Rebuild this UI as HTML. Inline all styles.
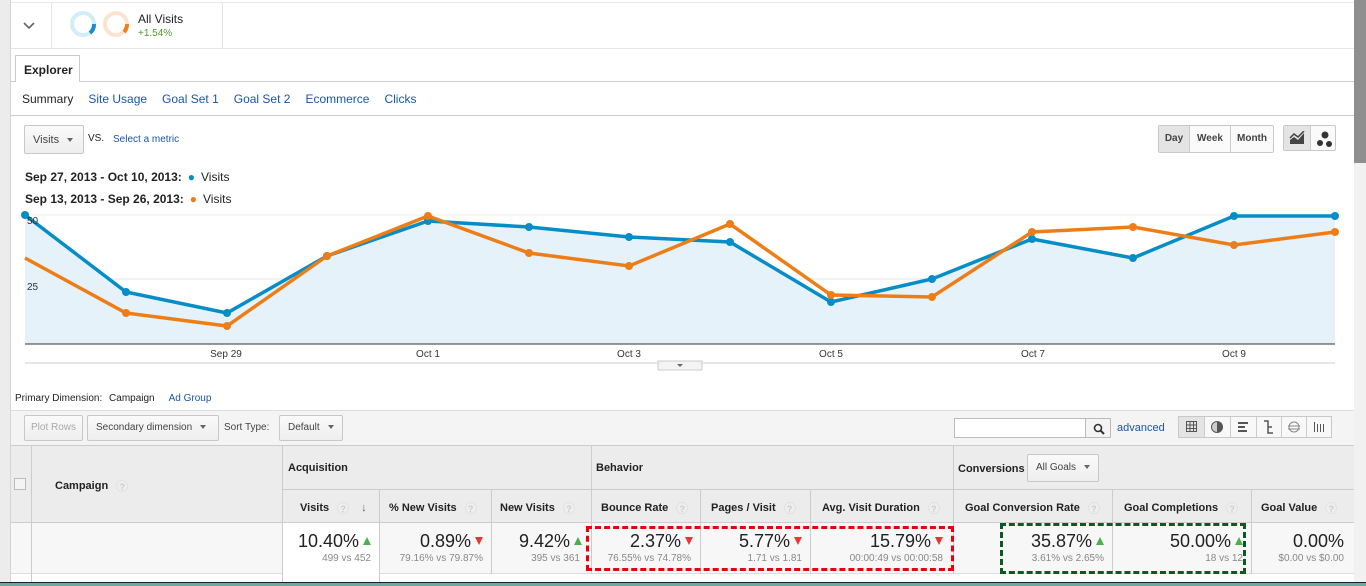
<!DOCTYPE html>
<html><head><meta charset="utf-8"><style>
*{box-sizing:border-box;margin:0;padding:0}
body{width:1366px;height:586px;overflow:hidden;background:#fff;font-family:"Liberation Sans",Arial,sans-serif;position:relative;color:#222}
.a{position:absolute}
.link{color:#1a56a8}
.q{display:inline-block;width:12px;height:12px;border-radius:50%;background:#eee;color:#ccc;font-size:9px;text-align:center;line-height:12px;vertical-align:middle;margin-left:8px;border:1px solid #e2e2e2}
.btn{position:absolute;border:1px solid #c8c8c8;border-radius:2px;background:linear-gradient(#fafafa,#eee);font-size:11px;color:#444;line-height:24px;padding:0 8px}
.tri{display:inline-block;width:0;height:0;border-left:3px solid transparent;border-right:3px solid transparent;border-top:4px solid #666;vertical-align:middle;margin-left:8px}
.h{position:absolute;font-size:11px;font-weight:bold;color:#222}
.big{position:absolute;font-size:18px;color:#222;text-align:right;white-space:nowrap}
.sm{position:absolute;font-size:10px;color:#888;text-align:right;white-space:nowrap}
.up{display:inline-block;width:0;height:0;border-left:4px solid transparent;border-right:4px solid transparent;border-bottom:8px solid #4caf50;margin-left:4px;vertical-align:2px}
.dn{display:inline-block;width:0;height:0;border-left:4px solid transparent;border-right:4px solid transparent;border-top:8px solid #e53935;margin-left:4px;vertical-align:2px}
</style></head><body>
<div class="a" style="left:0;top:0;width:11px;height:586px;background:#ececec;border-right:1px solid #d4d4d4"></div>
<div class="a" style="left:1354px;top:0;width:12px;height:586px;background:#f1f1f1"></div>
<div class="a" style="left:1354px;top:0;width:12px;height:163px;background:#8f8f8f"></div>
<div class="a" style="left:11px;top:2px;width:1343px;height:1px;background:#e8e8e8"></div>
<div class="a" style="left:11px;top:48px;width:1343px;height:1px;background:#e5e5e5"></div>
<div class="a" style="left:51px;top:3px;width:172px;height:46px;border-left:1px solid #e5e5e5;border-right:1px solid #e5e5e5"></div>
<svg class="a" style="left:23px;top:22px" width="12" height="8"><path d="M1 1 L6 6 L11 1" stroke="#666" stroke-width="1.6" fill="none"/></svg>
<svg class="a" style="left:69px;top:10px" width="64" height="30"><circle cx="14" cy="14" r="11" fill="none" stroke="#d2ecf8" stroke-width="4"/><path d="M25 14 A11 11 0 0 1 21 23" stroke="#1b8ad1" stroke-width="4" fill="none"/><circle cx="47" cy="14" r="11" fill="none" stroke="#fde3cf" stroke-width="4"/><path d="M58 14 A11 11 0 0 1 55 22" stroke="#f07f1d" stroke-width="4" fill="none"/></svg>
<div class="a" style="left:138px;top:12px;font-size:12px">All Visits</div>
<div class="a" style="left:138px;top:28px;font-size:10px;color:#4a9b2b">+1.54%</div>
<div class="a" style="left:11px;top:81px;width:1343px;height:1px;background:#ccc"></div>
<div class="a" style="left:15px;top:55px;width:65px;height:27px;background:#fff;z-index:1;border:1px solid #ccc;border-bottom:none;font-size:12px;font-weight:bold;padding:7px 0 0 8px">Explorer</div>
<div class="a" style="left:22px;top:92px;font-size:12px"><span>Summary</span><span class="link" style="margin-left:15px">Site Usage</span><span class="link" style="margin-left:15px">Goal Set 1</span><span class="link" style="margin-left:15px">Goal Set 2</span><span class="link" style="margin-left:15px">Ecommerce</span><span class="link" style="margin-left:15px">Clicks</span></div>
<div class="a" style="left:11px;top:115px;width:1343px;height:1px;background:#ccc"></div>
<div class="btn" style="left:24px;top:125px;height:29px;line-height:28px;width:60px">Visits<span class="tri"></span></div>
<div class="a" style="left:88px;top:133px;font-size:10px">VS.</div>
<div class="a link" style="left:113px;top:134px;font-size:10px">Select a metric</div>
<div class="a" style="left:1158px;top:125px;width:116px;height:28px;border:1px solid #c8c8c8;border-radius:2px;background:#fafafa;font-size:10px;font-weight:bold;color:#444">
<span class="a" style="left:0;top:0;width:31px;height:26px;background:#e4e4e4;border-right:1px solid #ccc;text-align:center;line-height:26px">Day</span>
<span class="a" style="left:31px;top:0;width:41px;height:26px;border-right:1px solid #ccc;text-align:center;line-height:26px">Week</span>
<span class="a" style="left:72px;top:0;width:42px;height:26px;text-align:center;line-height:26px">Month</span></div>
<div class="a" style="left:1283px;top:125px;width:53px;height:26px;border:1px solid #c8c8c8;border-radius:2px;background:#fafafa">
<span class="a" style="left:0;top:0;width:27px;height:24px;background:#e4e4e4;border-right:1px solid #ccc"></span>
<svg class="a" style="left:5px;top:5px" width="16" height="14"><path d="M1 13 L1 9 L5 6 L9 9 L15 2 L15 13 Z" fill="#444"/><path d="M1 7 L5 3 L9 6 L15 0" stroke="#444" stroke-width="1.5" fill="none"/></svg>
<svg class="a" style="left:32px;top:4px" width="18" height="18"><circle cx="9" cy="5" r="3.5" fill="#333"/><circle cx="4" cy="13" r="3" fill="#333"/><circle cx="13" cy="14" r="3" fill="#333"/></svg></div>
<div class="a" style="left:25px;top:170px;font-size:12px;font-weight:bold">Sep 27, 2013 - Oct 10, 2013:<span style="color:#058dc7;margin-left:6px">&#9679;</span><span style="font-weight:normal;margin-left:6px">Visits</span></div>
<div class="a" style="left:25px;top:192px;font-size:12px;font-weight:bold">Sep 13, 2013 - Sep 26, 2013:<span style="color:#ed7e17;margin-left:6px">&#9679;</span><span style="font-weight:normal;margin-left:6px">Visits</span></div>
<svg class="a" style="left:0;top:200px" width="1354" height="180">
<line x1="25" y1="15" x2="1335" y2="15" stroke="#eee"/><line x1="25" y1="79" x2="1335" y2="79" stroke="#e6e6e6"/>
<polygon fill="#e5f2f9" points="25,15 126,92 227,113 327,56 428,21 529,27 629,37 730,42 831,102 932,79 1032,39 1133,58 1234,16 1335,16 1335,144 25,144"/>
<line x1="25" y1="144" x2="1335" y2="144" stroke="#333"/>
<polyline fill="none" stroke="#058dc7" stroke-width="3.5" points="25,15 126,92 227,113 327,56 428,21 529,27 629,37 730,42 831,102 932,79 1032,39 1133,58 1234,16 1335,16"/>
<polyline fill="none" stroke="#ed7e17" stroke-width="3.5" points="25,58 126,113 227,126 327,56 428,16 529,53 629,66 730,24 831,95 932,97 1032,32 1133,27 1234,45 1335,32"/>
<g fill="#058dc7"><circle cx="25" cy="15" r="4"/><circle cx="126" cy="92" r="4"/><circle cx="227" cy="113" r="4"/><circle cx="327" cy="56" r="4"/><circle cx="428" cy="21" r="4"/><circle cx="529" cy="27" r="4"/><circle cx="629" cy="37" r="4"/><circle cx="730" cy="42" r="4"/><circle cx="831" cy="102" r="4"/><circle cx="932" cy="79" r="4"/><circle cx="1032" cy="39" r="4"/><circle cx="1133" cy="58" r="4"/><circle cx="1234" cy="16" r="4"/><circle cx="1335" cy="16" r="4"/></g>
<g fill="#ed7e17"><circle cx="126" cy="113" r="4"/><circle cx="227" cy="126" r="4"/><circle cx="327" cy="56" r="4"/><circle cx="428" cy="16" r="4"/><circle cx="529" cy="53" r="4"/><circle cx="629" cy="66" r="4"/><circle cx="730" cy="24" r="4"/><circle cx="831" cy="95" r="4"/><circle cx="932" cy="97" r="4"/><circle cx="1032" cy="32" r="4"/><circle cx="1133" cy="27" r="4"/><circle cx="1234" cy="45" r="4"/><circle cx="1335" cy="32" r="4"/></g>
<g font-size="10" fill="#333" font-family="Liberation Sans"><text x="27" y="24">50</text><text x="27" y="90">25</text>
<text x="226" y="157" text-anchor="middle">Sep 29</text><text x="428" y="157" text-anchor="middle">Oct 1</text><text x="629" y="157" text-anchor="middle">Oct 3</text><text x="831" y="157" text-anchor="middle">Oct 5</text><text x="1033" y="157" text-anchor="middle">Oct 7</text><text x="1234" y="157" text-anchor="middle">Oct 9</text></g>
<line x1="25" y1="163" x2="1335" y2="163" stroke="#ccc"/>
<rect x="658" y="161" width="44" height="9" fill="#f4f4f4" stroke="#ccc"/><path d="M677 164 L683 164 L680 167Z" fill="#666"/>
</svg>
<div class="a" style="left:15px;top:393px;font-size:10px">Primary Dimension: <span style="margin-left:4px">Campaign</span><span class="link" style="margin-left:14px">Ad Group</span></div>
<div class="a" style="left:11px;top:410px;width:1343px;height:172px;background:#f4f4f4;border-top:1px solid #ddd"></div>
<div class="btn" style="left:24px;top:415px;color:#aaa;font-size:10px;padding:0 6px">Plot Rows</div>
<div class="btn" style="left:87px;top:415px;font-size:10px;width:132px">Secondary dimension<span class="tri"></span></div>
<div class="a" style="left:224px;top:422px;font-size:10px;color:#444">Sort Type:</div>
<div class="btn" style="left:279px;top:415px;font-size:10px;width:64px">Default<span class="tri"></span></div>
<div class="a" style="left:954px;top:418px;width:157px;height:20px;border:1px solid #bbb;background:#fff"></div>
<div class="a" style="left:1085px;top:418px;width:26px;height:20px;border:1px solid #bbb;background:#f4f4f4"><svg class="a" style="left:7px;top:4px" width="12" height="12"><circle cx="5" cy="5" r="3.5" stroke="#333" stroke-width="1.6" fill="none"/><path d="M7.5 7.5 L11 11" stroke="#333" stroke-width="2"/></svg></div>
<div class="a link" style="left:1117px;top:422px;font-size:11px">advanced</div>
<div class="a" style="left:1178px;top:416px;width:154px;height:22px;border:1px solid #c8c8c8;background:#f8f8f8">
<svg width="152" height="20">
<rect x="0" y="0" width="25" height="20" fill="#e4e4e4"/>
<g stroke="#ccc"><line x1="25.5" y1="0" x2="25.5" y2="20"/><line x1="51.5" y1="0" x2="51.5" y2="20"/><line x1="77.5" y1="0" x2="77.5" y2="20"/><line x1="102.5" y1="0" x2="102.5" y2="20"/><line x1="127.5" y1="0" x2="127.5" y2="20"/></g>
<g stroke="#555" fill="none"><rect x="7.5" y="4.5" width="10" height="10"/><line x1="7" y1="8" x2="18" y2="8"/><line x1="7" y1="11.5" x2="18" y2="11.5"/><line x1="11" y1="4" x2="11" y2="15"/><line x1="14.5" y1="4" x2="14.5" y2="15"/></g>
<circle cx="38" cy="10" r="5.5" fill="#ccc" stroke="#555"/><path d="M38 4.5 A5.5 5.5 0 0 1 38 15.5 Z" fill="#555"/>
<g fill="#555"><rect x="59" y="5" width="10" height="2"/><rect x="59" y="9" width="7" height="2"/><rect x="59" y="13" width="9" height="2"/></g>
<g stroke="#555" stroke-width="1.5" fill="none"><path d="M85 4 H89 V16 H94 M89 10 H93"/></g>
<g stroke="#888" fill="none"><ellipse cx="115" cy="10" rx="5" ry="5"/><line x1="109" y1="9" x2="121" y2="9"/><line x1="109" y1="12" x2="121" y2="12"/></g>
<g stroke="#555"><line x1="135.5" y1="5" x2="135.5" y2="15"/><line x1="138.5" y1="7" x2="138.5" y2="15"/><line x1="141.5" y1="7" x2="141.5" y2="15"/><line x1="144.5" y1="7" x2="144.5" y2="15"/></g>
</svg></div>
<!-- table -->
<div class="a" style="left:11px;top:445px;width:1343px;height:137px;background:#ececec;border-top:1px solid #ccc"></div>
<div class="a" style="left:11px;top:522px;width:1343px;height:52px;background:#f7f7f7;border-top:1px solid #ccc;border-bottom:1px solid #ddd"></div>
<div class="a" style="left:282px;top:523px;width:97px;height:51px;background:#fff"></div>
<div class="a" style="left:11px;top:574px;width:1343px;height:8px;background:#fff"></div>
<div class="a" style="left:31px;top:445px;width:1px;height:137px;background:#ccc"></div>
<div class="a" style="left:282px;top:445px;width:1px;height:137px;background:#ccc"></div>
<div class="a" style="left:282px;top:489px;width:1072px;height:1px;background:#ccc"></div>
<div class="a" style="left:591px;top:445px;width:1px;height:129px;background:#ccc"></div>
<div class="a" style="left:953px;top:445px;width:1px;height:129px;background:#ccc"></div>
<div class="a" style="left:379px;top:489px;width:1px;height:93px;background:#ccc"></div>
<div class="a" style="left:491px;top:489px;width:1px;height:85px;background:#ccc"></div>
<div class="a" style="left:700px;top:489px;width:1px;height:85px;background:#ccc"></div>
<div class="a" style="left:810px;top:489px;width:1px;height:85px;background:#ccc"></div>
<div class="a" style="left:1112px;top:489px;width:1px;height:85px;background:#ccc"></div>
<div class="a" style="left:1251px;top:489px;width:1px;height:85px;background:#ccc"></div>
<div class="a" style="left:14px;top:478px;width:12px;height:12px;border:1px solid #bbb;background:#f4f4f4"></div>
<div class="h" style="left:55px;top:480px">Campaign<span class="q">?</span></div>
<div class="h" style="left:288px;top:462px">Acquisition</div>
<div class="h" style="left:596px;top:462px">Behavior</div>
<div class="h" style="left:958px;top:463px">Conversions</div>
<div class="btn" style="left:1027px;top:454px;height:28px;line-height:26px;font-size:10px;width:72px">All Goals<span class="tri"></span></div>
<div class="h" style="left:300px;top:502px">Visits<span class="q">?</span><span style="margin-left:12px;color:#666">&#8595;</span></div>
<div class="h" style="left:389px;top:502px">% New Visits<span class="q">?</span></div>
<div class="h" style="left:500px;top:502px">New Visits<span class="q">?</span></div>
<div class="h" style="left:601px;top:502px">Bounce Rate<span class="q">?</span></div>
<div class="h" style="left:711px;top:502px">Pages / Visit<span class="q">?</span></div>
<div class="h" style="left:822px;top:502px">Avg. Visit Duration<span class="q">?</span></div>
<div class="h" style="left:965px;top:502px">Goal Conversion Rate<span class="q">?</span></div>
<div class="h" style="left:1124px;top:502px">Goal Completions<span class="q">?</span></div>
<div class="h" style="left:1261px;top:502px">Goal Value<span class="q">?</span></div>
<div class="big" style="right:995px;top:531px">10.40%<span class="up"></span></div><div class="sm" style="right:995px;top:553px">499 vs 452</div>
<div class="big" style="right:883px;top:531px">0.89%<span class="dn"></span></div><div class="sm" style="right:883px;top:553px">79.16% vs 79.87%</div>
<div class="big" style="right:784px;top:531px">9.42%<span class="up"></span></div><div class="sm" style="right:786px;top:553px">395 vs 361</div>
<div class="big" style="right:673px;top:531px">2.37%<span class="dn"></span></div><div class="sm" style="right:675px;top:553px">76.55% vs 74.78%</div>
<div class="big" style="right:564px;top:531px">5.77%<span class="dn"></span></div><div class="sm" style="right:564px;top:553px">1.71 vs 1.81</div>
<div class="big" style="right:423px;top:531px">15.79%<span class="dn"></span></div><div class="sm" style="right:423px;top:553px">00:00:49 vs 00:00:58</div>
<div class="big" style="right:262px;top:531px">35.87%<span class="up"></span></div><div class="sm" style="right:262px;top:553px">3.61% vs 2.65%</div>
<div class="big" style="right:123px;top:531px">50.00%<span class="up"></span></div><div class="sm" style="right:123px;top:553px">18 vs 12</div>
<div class="big" style="right:22px;top:531px">0.00%</div><div class="sm" style="right:22px;top:553px">$0.00 vs $0.00</div>
<div class="a" style="left:586px;top:526px;width:368px;height:45px;border:3px dashed #e8000b"></div>
<div class="a" style="left:1000px;top:523px;width:246px;height:51px;border:3px dashed #0b5a22"></div>
<div class="a" style="left:0;top:582px;width:1366px;height:4px;background:#6fa8a0;border-top:1px solid #222"></div>
</body></html>
